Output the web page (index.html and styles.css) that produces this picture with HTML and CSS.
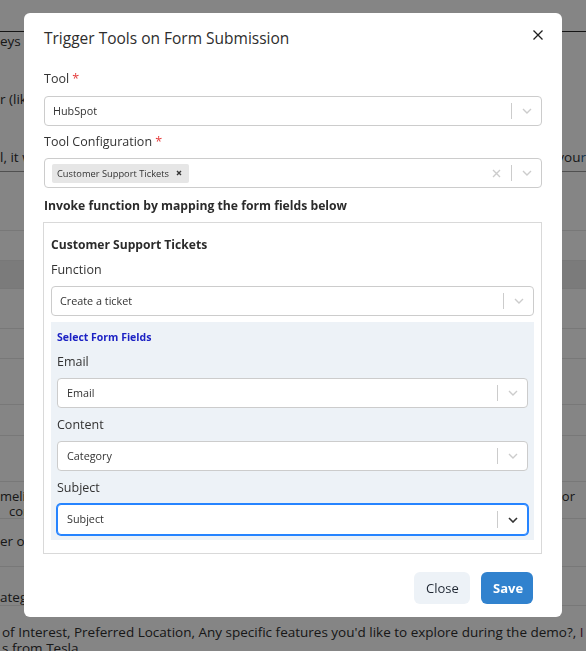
FILE: index.html
```html
<!DOCTYPE html>
<html lang="en">
<head>
<meta charset="utf-8">
<title>Trigger Tools on Form Submission</title>
<link rel="stylesheet" href="styles.css">
</head>
<body>
<div class="page">
  <div class="page-head"></div>
  <div class="page-intro">
    <div class="line"><span class="frag">eys a</span></div>
    <div class="line"><span class="frag">r (lik</span></div>
    <div class="line"><span class="frag">l, it w</span><span class="frag right">you<b class="link">r</b></span></div>
  </div>
  <div class="row h59"></div>
  <div class="row h30"></div>
  <div class="row h28 alt"></div>
  <div class="row h40"></div>
  <div class="row h30"></div>
  <div class="row h46"></div>
  <div class="row h31"></div>
  <div class="row h46"></div>
  <div class="row h37 text2">
    <span class="frag">meli</span>
    <span class="frag">con</span>
    <span class="frag right mid">or</span>
  </div>
  <div class="row h48 text1"><span class="frag">er of</span></div>
  <div class="row h39 text1 lower"><span class="frag">atego</span></div>
  <div class="row last">
    <span class="frag">of Interest, Preferred Location, Any specific features you'd like to explore during the demo?, <b class="mark">I</b></span>
    <span class="frag">s from Tesla</span>
  </div>
</div>

<div class="overlay">
  <div class="modal" role="dialog">
    <header class="modal-header">
      <h2 class="modal-title">Trigger Tools on Form Submission</h2>
      <button class="close-x" aria-label="Close">
        <svg width="10" height="10" viewBox="0 0 10 10"><path d="M0.5 0.5L9.5 9.5M9.5 0.5L0.5 9.5" stroke="#1f1f1f" stroke-width="1.3" fill="none"/></svg>
      </button>
    </header>

    <div class="modal-body">
      <label class="label">Tool <span class="req">*</span></label>
      <div class="select">
        <div class="value">HubSpot</div>
        <div class="indicators">
          <span class="sep"></span>
          <span class="ind"><svg width="10" height="6" viewBox="0 0 10 6"><path d="M1 1l4 4 4-4" stroke="#cccccc" stroke-width="1.4" fill="none"/></svg></span>
        </div>
      </div>

      <label class="label l2">Tool Configuration <span class="req">*</span></label>
      <div class="select">
        <div class="value">
          <span class="chip">Customer Support Tickets <span class="chip-x">
            <svg width="6" height="6" viewBox="0 0 6 6"><path d="M1 1l4 4M5 1l-4 4" stroke="#333" stroke-width="1.4" fill="none"/></svg></span></span>
        </div>
        <div class="indicators">
          <span class="ind"><svg width="9" height="9" viewBox="0 0 9 9"><path d="M1 1l7 7M8 1l-7 7" stroke="#cccccc" stroke-width="1.4" fill="none"/></svg></span>
          <span class="sep"></span>
          <span class="ind"><svg width="10" height="6" viewBox="0 0 10 6"><path d="M1 1l4 4 4-4" stroke="#cccccc" stroke-width="1.4" fill="none"/></svg></span>
        </div>
      </div>

      <h3 class="section-title">Invoke function by mapping the form fields below</h3>

      <div class="mapping">
        <h4 class="mapping-title">Customer Support Tickets</h4>
        <label class="label fn">Function</label>
        <div class="select">
          <div class="value">Create a ticket</div>
          <div class="indicators">
            <span class="sep"></span>
            <span class="ind"><svg width="10" height="6" viewBox="0 0 10 6"><path d="M1 1l4 4 4-4" stroke="#cccccc" stroke-width="1.4" fill="none"/></svg></span>
          </div>
        </div>

        <div class="fields">
          <div class="fields-title">Select Form Fields</div>
          <label class="label">Email</label>
          <div class="select">
            <div class="value">Email</div>
            <div class="indicators">
              <span class="sep"></span>
              <span class="ind"><svg width="10" height="6" viewBox="0 0 10 6"><path d="M1 1l4 4 4-4" stroke="#cccccc" stroke-width="1.4" fill="none"/></svg></span>
            </div>
          </div>
          <label class="label">Content</label>
          <div class="select">
            <div class="value">Category</div>
            <div class="indicators">
              <span class="sep"></span>
              <span class="ind"><svg width="10" height="6" viewBox="0 0 10 6"><path d="M1 1l4 4 4-4" stroke="#cccccc" stroke-width="1.4" fill="none"/></svg></span>
            </div>
          </div>
          <label class="label">Subject</label>
          <div class="select focused">
            <div class="value">Subject</div>
            <div class="indicators">
              <span class="sep"></span>
              <span class="ind"><svg width="10" height="6" viewBox="0 0 10 6"><path d="M1 1l4 4 4-4" stroke="#333333" stroke-width="1.6" fill="none"/></svg></span>
            </div>
          </div>
        </div>
      </div>
    </div>

    <footer class="modal-footer">
      <button class="btn btn-ghost">Close</button>
      <button class="btn btn-primary">Save</button>
    </footer>
  </div>
</div>
</body>
</html>
```

FILE: styles.css
```css
* { box-sizing: border-box; }

html, body {
  margin: 0;
  height: 100%;
  overflow: hidden;
}

body {
  font-family: "Open Sans", "Noto Sans", sans-serif;
  color: #333333;
  background: #ffffff;
}

/* ---------- background page ---------- */
.page {
  font-size: 13.5px;
  color: #2e2e2e;
}

.page-head {
  height: 32px;
  border-bottom: 1px solid #2a2a2a;
}

.page-intro {
  height: 140px;
  display: flex;
  flex-direction: column;
  gap: 39px;
  border-bottom: 1px solid #9a9a9a;
}

.line,
.row.text1 {
  display: flex;
  justify-content: space-between;
  align-items: center;
  white-space: nowrap;
  line-height: 19px;
}

.frag { white-space: nowrap; }
.frag.right { margin-left: auto; }
.link { font-weight: normal; color: #1f5f8f; }
.mark { font-weight: normal; color: #6b1847; }

.row {
  border-bottom: 1px solid #e6e6e6;
  overflow: hidden;
}
.row.alt { background: #ececec; }
.h28 { height: 28px; }
.h30 { height: 30px; }
.h31 { height: 31px; }
.h37 { height: 37px; }
.h39 { height: 39px; }
.h40 { height: 40px; }
.h46 { height: 46px; }
.h48 { height: 48px; }
.h59 { height: 59px; }

.row.text2 {
  display: grid;
  grid-template-columns: 1fr auto;
  grid-template-rows: 15px 14px;
  padding-top: 7px;
  white-space: nowrap;
  line-height: 14px;
  font-size: 13px;
}
.row.text2 .frag:nth-child(2) { padding-left: 9px; }
.row.text2 .mid { grid-column: 2; grid-row: 1; padding-right: 11px; }

.row.text1 { padding-top: 13px; align-items: flex-start; }
.row.text1.lower { padding-top: 21px; }

.row.last {
  border-bottom: 0;
  padding-top: 18px;
  padding-left: 2px;
  display: flex;
  flex-direction: column;
  line-height: 16px;
  white-space: nowrap;
}

/* ---------- overlay + modal ---------- */
.overlay {
  position: fixed;
  inset: 0;
  background: rgba(0, 0, 0, 0.48);
  display: flex;
  justify-content: center;
  align-items: flex-start;
  padding-top: 13px;
}

.modal {
  width: 538px;
  height: 604px;
  background: #ffffff;
  border-radius: 6px;
  display: flex;
  flex-direction: column;
  color: #333333;
}

.modal-header {
  display: flex;
  justify-content: space-between;
  align-items: flex-start;
  padding: 13px 17px 0 20px;
}

.modal-title {
  margin: 0;
  font-size: 15.5px;
  line-height: 24px;
  font-weight: 400;
  color: #2d2d2d;
}

.close-x {
  border: 0;
  background: none;
  padding: 0;
  margin-top: 2px;
  width: 14px;
  height: 14px;
  display: flex;
  align-items: center;
  justify-content: center;
}

.modal-body {
  padding: 19px 20px 0 20px;
  display: flex;
  flex-direction: column;
}

.label {
  display: block;
  font-size: 12.5px;
  line-height: 20px;
  color: #333333;
  margin-bottom: 7px;
}
.label.l2 { margin-top: 6px; margin-bottom: 6px; }
.req { color: #e53e3e; }

.select {
  height: 30px;
  border: 1px solid #cccccc;
  border-radius: 4px;
  background: #ffffff;
  display: flex;
  align-items: stretch;
}

.select .value {
  flex: 1;
  display: flex;
  align-items: center;
  padding-left: 8px;
  padding-bottom: 2px;
  font-size: 10.8px;
  color: #333333;
}

.indicators {
  display: flex;
  align-items: stretch;
}

.sep {
  width: 1px;
  background: #cccccc;
  margin: 6px 0;
}

.ind {
  width: 29px;
  display: flex;
  align-items: center;
  justify-content: center;
}

.chip {
  display: inline-flex;
  align-items: center;
  height: 19px;
  margin-left: -1px;
  margin-top: 2px;
  padding: 0 7px 0 5px;
  background: #e6e6e6;
  border-radius: 2px;
  font-size: 9.3px;
  color: #333333;
}
.chip-x {
  display: inline-flex;
  margin-left: 7px;
}

.section-title {
  margin: 9px 0 0 0;
  font-size: 12.2px;
  line-height: 18px;
  font-weight: 700;
  color: #2b2b2b;
}

.mapping {
  margin-top: 7px;
  margin-left: -1px;
  border: 1px solid #d9d9d9;
  padding: 12px 7px 13px 7px;
}

.mapping-title {
  margin: 0;
  font-size: 12.1px;
  line-height: 20px;
  font-weight: 700;
  color: #2b2b2b;
}

.label.fn { margin-top: 5px; margin-bottom: 6px; }

.fields {
  margin-top: 6px;
  background: #edf2f7;
  padding: 8px 6px 5px 6px;
}

.fields-title {
  font-size: 10.5px;
  line-height: 14px;
  font-weight: 700;
  color: #1c22c4;
  margin-bottom: 8px;
}

.fields .label { margin-bottom: 6px; }
.fields .select + .label { margin-top: 7px; }
.fields .select .value { padding-left: 9px; }

.select.focused {
  border: 1px solid #2684ff;
  box-shadow: 0 0 0 1px #2684ff;
  height: 31px;
}

.modal-footer {
  margin-top: auto;
  display: flex;
  justify-content: flex-end;
  gap: 11px;
  padding: 0 29px 13px 0;
}

.btn {
  height: 32px;
  border: 0;
  border-radius: 6px;
  font-family: inherit;
  font-size: 13px;
  padding: 0 12px;
}
.btn-ghost {
  background: #edf2f7;
  color: #1f2733;
  width: 56px;
}
.btn-primary {
  background: #3182ce;
  color: #ffffff;
  font-weight: 700;
  width: 52px;
}
```
